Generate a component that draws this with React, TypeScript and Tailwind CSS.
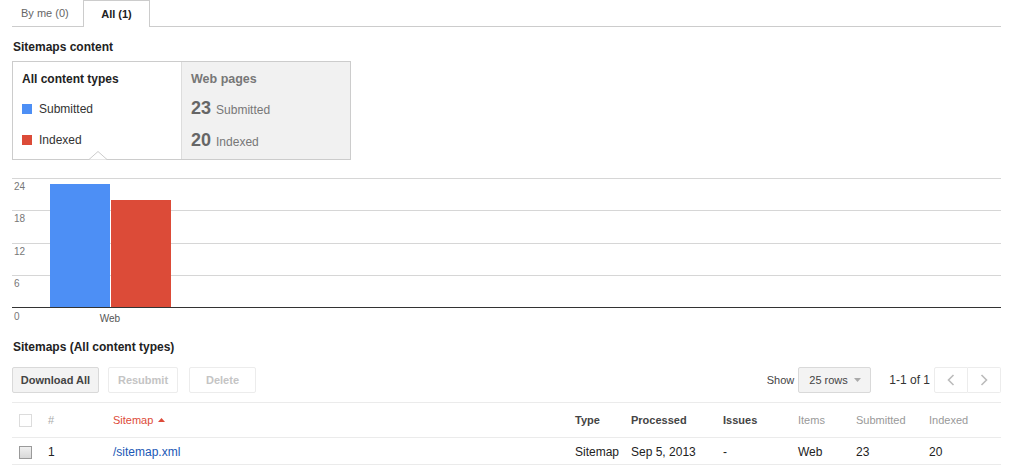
import React from "react";

const font = { fontFamily: '"Liberation Sans", Arial, sans-serif' };

function Chart() {
  const lines = [8, 40.25, 72.5, 104.75];
  const labels = ["24", "18", "12", "6"];
  return (
    <svg width={989} height={155} className="block mt-[10px]" shapeRendering="crispEdges">
      {lines.map((y, i) => (
        <g key={i}>
          <line x1={0} x2={989} y1={Math.round(y) + 0.5} y2={Math.round(y) + 0.5} stroke="#d6d6d6" strokeWidth={1} />
          <text x={2} y={Math.round(y) + 12} fontSize={10} fill="#777" fontFamily="Liberation Sans, Arial, sans-serif" shapeRendering="auto">
            {labels[i]}
          </text>
        </g>
      ))}
      <rect x={38} y={14} width={60} height={123} fill="#4d8ff5" />
      <rect x={99} y={30} width={60} height={107} fill="#dc4b38" />
      <line x1={0} x2={989} y1={137.5} y2={137.5} stroke="#333" strokeWidth={1} />
      <text x={2} y={150} fontSize={10} fill="#777" fontFamily="Liberation Sans, Arial, sans-serif">0</text>
      <text x={98} y={152} fontSize={10} fill="#555" textAnchor="middle" fontFamily="Liberation Sans, Arial, sans-serif">Web</text>
    </svg>
  );
}

export default function App() {
  return (
    <div className="bg-white w-[1024px] h-[471px] overflow-hidden" style={font}>
      <div className="ml-3 w-[989px]">
        {/* Tabs */}
        <div className="flex h-[27px] border-b border-[#cccccc] items-end">
          <div className="w-[71px] h-[26px] pl-[9px] flex items-center text-[11px] text-[#666]">By me (0)</div>
          <div className="w-[67px] h-[27px] mb-[-1px] border border-b-0 border-[#cccccc] bg-white flex items-center justify-center text-[11px] font-bold text-[#222]">
            All (1)
          </div>
        </div>

        <div className="mt-[12px] text-[12px] leading-[16px] font-bold text-[#222] pl-px">Sitemaps content</div>

        {/* Content box */}
        <div className="relative mt-[6px] w-[339px] h-[99px] border border-[#cccccc] flex">
          <div className="w-[168px] pl-[9px] pt-[9px] bg-white">
            <div className="text-[12px] font-bold text-[#222] leading-[16px]">All content types</div>
            <div className="mt-[14px] flex items-center h-[16px]">
              <span className="w-[10px] h-[10px] bg-[#4d8ff5] inline-block" />
              <span className="ml-[7px] text-[12px] text-[#333]">Submitted</span>
            </div>
            <div className="mt-[15px] flex items-center h-[16px]">
              <span className="w-[10px] h-[10px] bg-[#dc4b38] inline-block" />
              <span className="ml-[7px] text-[12px] text-[#333]">Indexed</span>
            </div>
          </div>
          <div className="flex-1 bg-[#f1f1f1] border-l border-[#dddddd] pl-[9px] pt-[9px]">
            <div className="text-[12.5px] font-bold text-[#777] leading-[16px]">Web pages</div>
            <div className="mt-[8px] flex items-baseline h-[22px]">
              <span className="text-[18px] font-bold text-[#666]">23</span>
              <span className="ml-[5px] text-[12px] text-[#777]">Submitted</span>
            </div>
            <div className="mt-[10px] flex items-baseline h-[22px]">
              <span className="text-[18px] font-bold text-[#666]">20</span>
              <span className="ml-[5px] text-[12px] text-[#777]">Indexed</span>
            </div>
          </div>
          <svg width={18} height={9} className="absolute left-[76px] bottom-[-1px]">
            <polygon points="0,8.5 9,0.5 18,8.5" fill="#ffffff" />
            <polyline points="0,8.5 9,0.5 18,8.5" fill="none" stroke="#cccccc" strokeWidth={1} />
          </svg>
        </div>

        <Chart />

        <div className="mt-[14px] text-[12px] leading-[16px] font-bold text-[#222] pl-px">Sitemaps (All content types)</div>

        {/* Toolbar */}
        <div className="mt-[12px] flex items-center h-[26px]">
          <div className="w-[87px] h-[26px] border border-[#d9d9d9] bg-[#f3f3f3] rounded-[2px] flex items-center justify-center text-[11px] font-bold text-[#444]">
            Download All
          </div>
          <div className="ml-[9px] w-[70px] h-[26px] border border-[#ececec] bg-white rounded-[2px] flex items-center justify-center text-[11px] font-bold text-[#c4c4c4]">
            Resubmit
          </div>
          <div className="ml-[11px] w-[67px] h-[26px] border border-[#ececec] bg-white rounded-[2px] flex items-center justify-center text-[11px] font-bold text-[#c4c4c4]">
            Delete
          </div>
          <div className="flex-1" />
          <span className="text-[11px] text-[#444]">Show</span>
          <div className="ml-[4px] w-[73px] h-[26px] border border-[#d9d9d9] bg-[#f3f3f3] rounded-[2px] flex items-center pl-[10px] text-[11px] text-[#444]">
            25 rows
            <svg width={7} height={4} className="ml-[6px]">
              <polygon points="0,0 7,0 3.5,4" fill="#aaa" />
            </svg>
          </div>
          <span className="ml-[18px] text-[12px] text-[#333]">1-1 of 1</span>
          <div className="ml-[4px] flex h-[26px]">
            <div className="w-[34px] h-[26px] border border-[#ececec] rounded-l-[2px] flex items-center justify-center">
              <svg width={8} height={12}>
                <polyline points="6.5,1 1.5,6 6.5,11" fill="none" stroke="#bbb" strokeWidth={1.6} />
              </svg>
            </div>
            <div className="w-[33px] h-[26px] border border-l-0 border-[#ececec] rounded-r-[2px] flex items-center justify-center">
              <svg width={8} height={12}>
                <polyline points="1.5,1 6.5,6 1.5,11" fill="none" stroke="#bbb" strokeWidth={1.6} />
              </svg>
            </div>
          </div>
        </div>

        {/* Table */}
        <div className="mt-[9px] border-t border-[#ebebeb]">
          <div className="grid grid-cols-[36px_65px_462px_56px_92px_75px_58px_73px_72px] h-[35px] items-center border-b border-[#ebebeb] text-[11px]">
            <div className="pl-[7px] flex items-center">
              <span className="w-[13px] h-[13px] border border-[#dcdcdc] bg-white inline-block" />
            </div>
            <div className="text-[#aaa]">#</div>
            <div className="text-[#dd4b39] flex items-center">
              Sitemap
              <svg width={7} height={4} className="ml-[5px]">
                <polygon points="0,4 7,4 3.5,0" fill="#dd4b39" />
              </svg>
            </div>
            <div className="font-bold text-[#444]">Type</div>
            <div className="font-bold text-[#444]">Processed</div>
            <div className="font-bold text-[#444]">Issues</div>
            <div className="text-[#999]">Items</div>
            <div className="text-[#999]">Submitted</div>
            <div className="text-[#999]">Indexed</div>
          </div>
          <div className="grid grid-cols-[36px_65px_462px_56px_92px_75px_58px_73px_72px] h-[27px] items-center border-b border-[#ebebeb] text-[12px] text-[#222] pt-[2px]">
            <div className="pl-[7px] flex items-center">
              <span className="w-[13px] h-[13px] border border-[#9a9a9a] bg-gradient-to-b from-[#f0f0f0] to-[#d8d8d8] inline-block" />
            </div>
            <div>1</div>
            <div className="text-[#1a57b5]">/sitemap.xml</div>
            <div>Sitemap</div>
            <div>Sep 5, 2013</div>
            <div>-</div>
            <div>Web</div>
            <div>23</div>
            <div>20</div>
          </div>
        </div>
      </div>
    </div>
  );
}
